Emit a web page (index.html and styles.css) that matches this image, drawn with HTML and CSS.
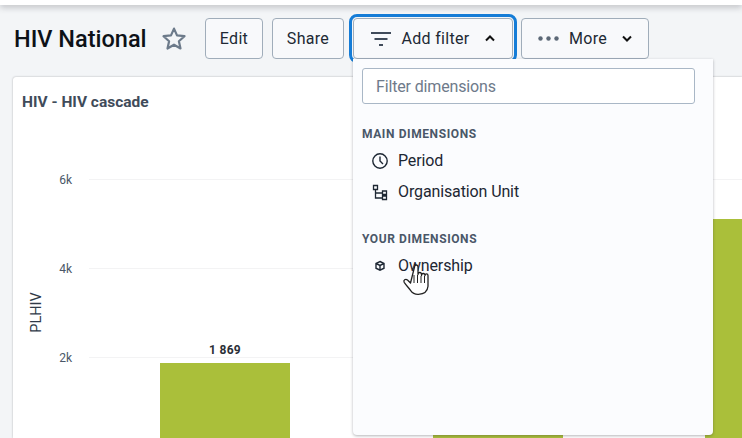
FILE: index.html
```html
<!DOCTYPE html>
<html lang="en">
<head>
    <meta charset="UTF-8">
    <title>HIV National</title>
    <link rel="stylesheet" href="styles.css">
</head>
<body>

<div class="topbar"></div>

<div class="titlebar">
    <h1>HIV National</h1>
    <svg class="star" width="26" height="26" viewBox="0 0 26 26"><path d="M13 2.600l3 6.800 7.500.8-5.600 5 1.600 7.300-6.500-3.800-6.500 3.800 1.600-7.300-5.600-5 7.500-.8z" fill="none" stroke="#6c7a8a" stroke-width="2.200" stroke-linejoin="round"/></svg>
    <button class="btn btn-edit">Edit</button>
    <button class="btn btn-share">Share</button>
    <div class="filter-wrap">
        <button class="btn btn-filter">
            <svg width="20" height="14" viewBox="0 0 20 14"><path d="M0 1h20M3.500 7h13M8 13h4" stroke="#404b5a" stroke-width="2"/></svg>
            <span>Add filter</span>
            <svg width="10" height="7" viewBox="0 0 10 7"><path d="M1 5.500l4-4 4 4" fill="none" stroke="#111" stroke-width="2"/></svg>
        </button>
    </div>
    <button class="btn btn-more">
        <svg width="21" height="5" viewBox="0 0 21 5"><circle cx="2.500" cy="2.500" r="2.200" fill="#5c6876"/><circle cx="10.500" cy="2.500" r="2.200" fill="#5c6876"/><circle cx="18.500" cy="2.500" r="2.200" fill="#5c6876"/></svg>
        <span>More</span>
        <svg width="10" height="7" viewBox="0 0 10 7"><path d="M1 1.500l4 4 4-4" fill="none" stroke="#111" stroke-width="2"/></svg>
    </button>
</div>

<div class="card">
    <h3>HIV - HIV cascade</h3>
    <svg class="chart" width="729" height="361" viewBox="13 77 729 361">
        <g stroke="#f3f3f4" stroke-width="1">
            <line x1="89" y1="179.500" x2="742" y2="179.500"/>
            <line x1="89" y1="268.500" x2="742" y2="268.500"/>
            <line x1="89" y1="357.500" x2="742" y2="357.500"/>
        </g>
        <g class="tick">
            <text x="72" y="184" text-anchor="end">6k</text>
            <text x="72" y="273" text-anchor="end">4k</text>
            <text x="72" y="362" text-anchor="end">2k</text>
        </g>
        <text class="axis" transform="translate(41 312.500) rotate(-90)" text-anchor="middle">PLHIV</text>
        <text class="value" x="225" y="354" text-anchor="middle">1 869</text>
        <rect x="160" y="363" width="130" height="75" fill="#aabf3a"/>
        <rect x="433" y="435" width="130" height="3" fill="#aabf3a"/>
        <rect x="705" y="219" width="37" height="219" fill="#aabf3a"/>
    </svg>
</div>

<div class="menu">
    <input class="menu-search" type="text" placeholder="Filter dimensions">
    <div class="menu-head">MAIN DIMENSIONS</div>
    <div class="menu-item">
        <svg width="18" height="18" viewBox="0 0 18 18"><circle cx="9" cy="9" r="7.200" fill="none" stroke="#1d2733" stroke-width="1.400"/><path d="M9 4.500V9l3 3" fill="none" stroke="#1d2733" stroke-width="1.400"/></svg>
        <span>Period</span>
    </div>
    <div class="menu-item">
        <svg width="18" height="18" viewBox="0 0 18 18"><path d="M2.500 2.500h4v4h-4zM11.500 8h4v3.500h-4zM11.500 13h4v3.500h-4zM4.500 6.500v8.500h7M4.500 10h7" fill="none" stroke="#1d2733" stroke-width="1.300"/></svg>
        <span>Organisation Unit</span>
    </div>
    <div class="menu-head menu-head-second">YOUR DIMENSIONS</div>
    <div class="menu-item">
        <svg width="18" height="18" viewBox="0 0 18 18"><path d="M9 4.500l4 2v4.700l-4 2-4-2V6.500zM5 6.500l4 2 4-2M9 8.500v4.700" fill="none" stroke="#1d2733" stroke-width="1.400"/></svg>
        <span>Ownership</span>
    </div>
</div>

<svg class="cursor" width="28" height="33" viewBox="0 0 28 33"><path d="M8.500 20l-3-3c-2-1.500-4.500.2-3.300 2.300 1.700 2.500 4.300 5.400 6.300 8 2 2.800 4.500 4.200 8 4 5-.2 9-2.800 9.500-8V12.500c0-2.200-3-2.200-3 0 0-2.700-3.500-2.700-3.500 0v-1c0-2.700-3.500-2.700-3.500 0V4c0-2.700-3.500-2.700-3.500 0z" fill="#fff" stroke="#222" stroke-width="1.300" stroke-linejoin="round"/><path d="M12 12v8M15.500 12v8M19 13v7M22.500 13v7" stroke="#222" stroke-width="1"/></svg>

</body>
</html>
```

FILE: styles.css
```css
html, body {
    margin: 0;
    height: 100%;
    overflow: hidden;
}
body {
    background: #f3f5f7;
    color: #212934;
    font-family: Roboto, "Liberation Sans", sans-serif;
    position: relative;
}
.topbar {
    height: 5px;
    background: #fff;
    box-shadow: 0 2px 6px rgba(60, 60, 70, 0.35);
}
.titlebar {
    display: flex;
    align-items: center;
    height: 41px;
    padding: 13px 0 13px 14px;
}
.titlebar h1 {
    margin: 0;
    font-size: 23.500px;
    font-weight: 500;
    color: #0d1117;
    width: 147px;
}
.star {
    margin: 0 18px 0 0;
    flex: none;
}
.btn {
    height: 41px;
    box-sizing: border-box;
    background: #f8f9fb;
    border: 1px solid #a0adba;
    border-radius: 4px;
    color: #212934;
    font-family: inherit;
    font-size: 16px;
    letter-spacing: 0.3px;
    padding: 0;
    display: flex;
    align-items: center;
    justify-content: center;
}
.btn-edit {
    width: 58px;
    margin-right: 9px;
}
.btn-share {
    width: 72px;
    margin-right: 9px;
}
.filter-wrap {
    margin-right: 8px;
}
.btn-filter {
    width: 160px;
    gap: 10px;
    outline: 3px solid #147cd7;
    outline-offset: 1px;
    border-radius: 4px;
}
.btn-filter span {
    margin-left: 1px;
    margin-right: 6px;
}
.btn-more {
    width: 128px;
    gap: 10px;
}
.btn-more span {
    margin-right: 5px;
}
.card {
    margin-left: 13px;
    margin-top: 5px;
    height: 361px;
    background: #fff;
    border-radius: 3px 0 0 0;
    box-shadow: 0 0 2px rgba(50, 50, 60, 0.4);
    position: relative;
}
.card h3 {
    position: absolute;
    left: 9px;
    top: 16px;
    margin: 0;
    font-size: 15.500px;
    font-weight: 700;
    color: #404b5a;
}
.chart {
    display: block;
}
.tick text {
    font-size: 12px;
    fill: #4a5768;
}
.axis {
    font-size: 14.500px;
    fill: #2f3a48;
}
.value {
    font-size: 12px;
    font-weight: 700;
    fill: #2b2f36;
    letter-spacing: 0.3px;
}
.menu {
    position: absolute;
    left: 353px;
    top: 59px;
    width: 360px;
    height: 376px;
    box-sizing: border-box;
    padding: 9px 18px 0 9px;
    background: #fbfcfe;
    border-radius: 0 0 4px 4px;
    box-shadow: 0 1px 3px rgba(40, 40, 50, 0.35);
}
.menu-search {
    display: block;
    width: 100%;
    height: 36px;
    box-sizing: border-box;
    padding: 0 13px;
    background: #fff;
    border: 1px solid #a9b7c6;
    border-radius: 3px;
    font-family: inherit;
    font-size: 16px;
    letter-spacing: -0.15px;
}
.menu-search::placeholder {
    color: #6e7a8a;
    opacity: 1;
}
.menu-head {
    margin-top: 23px;
    margin-bottom: 4px;
    font-size: 12px;
    font-weight: 700;
    letter-spacing: 0.6px;
    color: #4a5768;
    line-height: 14px;
}
.menu-head-second {
    margin-top: 25px;
}
.menu-item {
    display: flex;
    align-items: center;
    gap: 9px;
    height: 31px;
    padding-left: 9px;
    font-size: 16px;
    letter-spacing: -0.12px;
    color: #1d2733;
}
.cursor {
    position: absolute;
    left: 402px;
    top: 263px;
}
```
